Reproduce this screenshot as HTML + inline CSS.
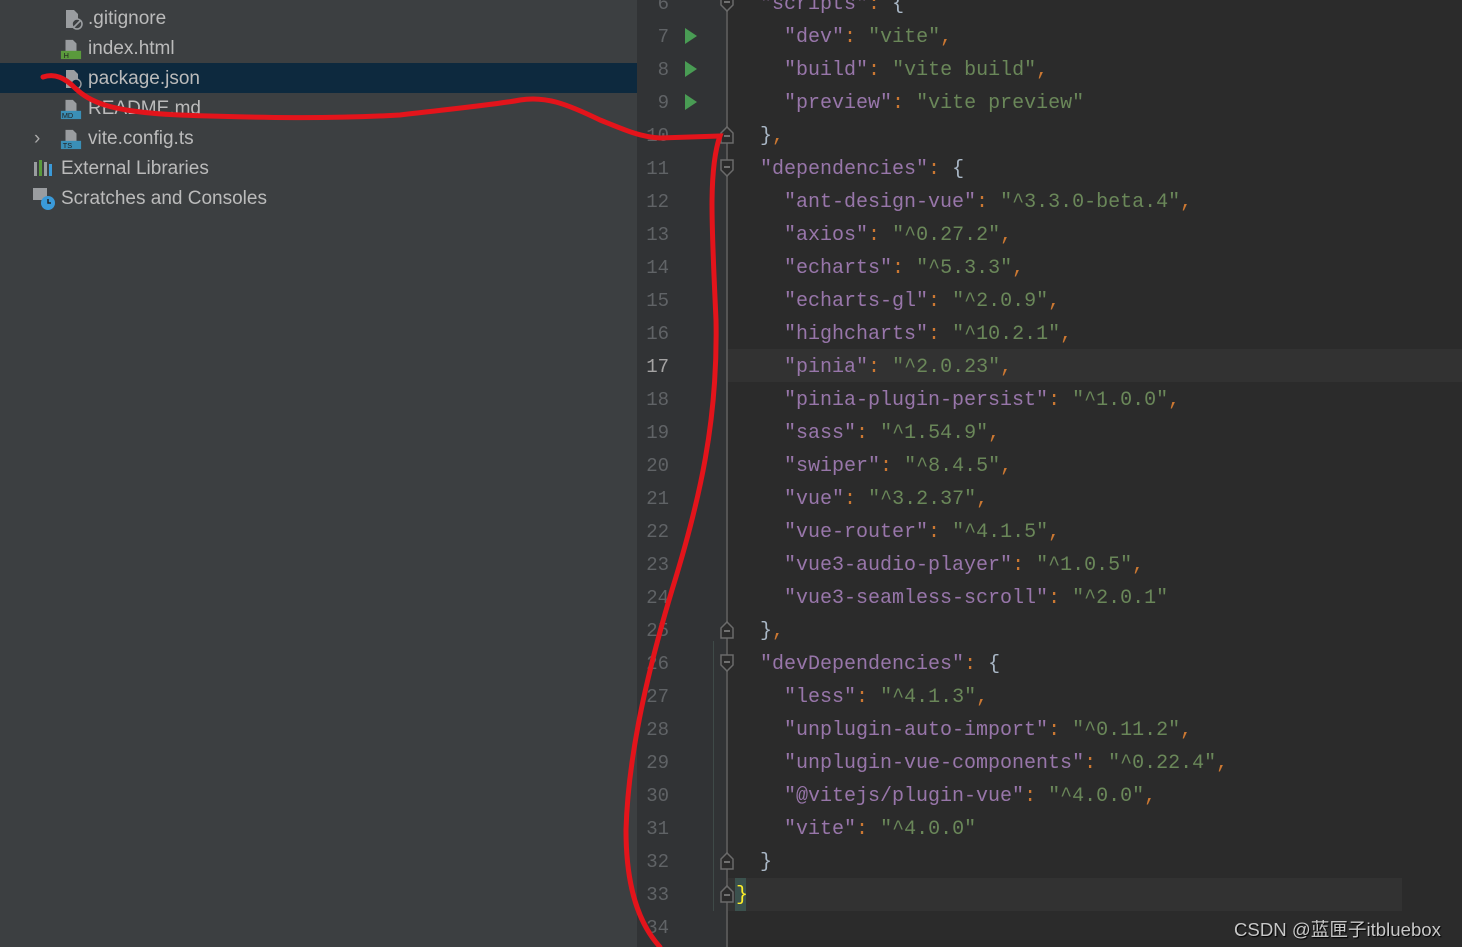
<!DOCTYPE html>
<html><head><meta charset="utf-8"><style>
*{margin:0;padding:0;box-sizing:border-box}
body{width:1462px;height:947px;overflow:hidden;background:#2b2b2b;position:relative;font-family:"Liberation Sans",sans-serif}
#side{position:absolute;left:0;top:0;width:637px;height:947px;background:#3c3f41}
.row{position:absolute;left:0;width:637px;height:30px;line-height:32px;font-size:19px;color:#bbbbbb}
.sel{background:#0d293e}
.fi{position:absolute;top:5px;width:22px;height:22px}
#gut{position:absolute;left:637px;top:0;width:90px;height:947px;background:#313335}
.ln{position:absolute;left:637px;width:32px;text-align:right;font:19px "Liberation Mono",monospace;color:#606366;height:33px;line-height:33px}
.cl{position:absolute;left:736px;font:20px "Liberation Mono",monospace;white-space:pre;height:33px;line-height:33px;color:#a9b7c6}
.k{color:#9876aa}.s{color:#6a8759}.p{color:#cc7832}
.run{position:absolute;left:685px;width:0;height:0;border-top:8px solid transparent;border-bottom:8px solid transparent;border-left:12px solid #499c54}
.fold{position:absolute;left:719px;width:16px;height:18px}
</style></head><body>
<div id="side">
 <div class="row" style="top:3px"><svg class="fi" style="left:62px" viewBox="0 0 22 22"><path d="M4 2h8l4 4v14H4z" fill="#9a9da0"/><circle cx="15" cy="16" r="5" fill="#3c3f41" stroke="#9a9da0" stroke-width="1.6"/><path d="M12 19l6-6" stroke="#9a9da0" stroke-width="1.6"/></svg><span style="position:absolute;left:88px">.gitignore</span></div>
 <div class="row" style="top:33px"><svg class="fi" style="left:60px" viewBox="0 0 24 22"><path d="M6 1h8l4 4v9H6z" fill="#9a9da0"/><rect x="1" y="13" width="22" height="9" fill="#5a9a3c"/><text x="4" y="21" font-size="8" fill="#222" font-family="Liberation Sans">H</text></svg><span style="position:absolute;left:88px">index.html</span></div>
 <div class="row sel" style="top:63px"><svg class="fi" style="left:62px" viewBox="0 0 22 22"><path d="M4 2h8l4 4v14H4z" fill="#9a9da0"/><circle cx="14" cy="16" r="5" fill="#0d293e" stroke="#9a9da0" stroke-width="1.4"/></svg><span style="position:absolute;left:88px">package.json</span></div>
 <div class="row" style="top:93px"><svg class="fi" style="left:60px" viewBox="0 0 24 22"><path d="M6 1h8l4 4v9H6z" fill="#9a9da0"/><rect x="1" y="13" width="22" height="9" fill="#3a8fb7"/><text x="2" y="21" font-size="8" fill="#222" font-family="Liberation Sans">MD</text></svg><span style="position:absolute;left:88px">README.md</span></div>
 <div class="row" style="top:123px"><span style="position:absolute;left:34px;color:#aaa">&#8250;</span><svg class="fi" style="left:60px" viewBox="0 0 24 22"><path d="M6 1h8l4 4v9H6z" fill="#9a9da0"/><rect x="1" y="13" width="22" height="9" fill="#3a8fb7"/><text x="3" y="21" font-size="8" fill="#222" font-family="Liberation Sans">TS</text></svg><span style="position:absolute;left:88px">vite.config.ts</span></div>
 <div class="row" style="top:153px"><svg class="fi" style="left:33px" viewBox="0 0 22 22"><rect x="1" y="4" width="3" height="14" fill="#9a9da0"/><rect x="6" y="2" width="3" height="16" fill="#5a9a3c"/><rect x="11" y="4" width="3" height="14" fill="#9a9da0"/><rect x="16" y="6" width="3" height="12" fill="#3a9ad9"/></svg><span style="position:absolute;left:61px">External Libraries</span></div>
 <div class="row" style="top:183px"><svg class="fi" style="left:33px" viewBox="0 0 22 22"><rect x="0" y="0" width="14" height="12" fill="#9a9da0"/><circle cx="15" cy="15" r="7" fill="#3a9ad9"/><path d="M15 11v4h3" stroke="#222" stroke-width="1.5" fill="none"/></svg><span style="position:absolute;left:61px">Scratches and Consoles</span></div>
</div>
<div id="gut"></div>
<div style="position:absolute;left:727px;top:349px;width:735px;height:33px;background:#323232"></div>
<div style="position:absolute;left:727px;top:878px;width:675px;height:33px;background:#323232"></div>
<div style="position:absolute;left:735px;top:878px;width:11px;height:33px;background:#3b514d"></div>
<div style="position:absolute;left:726px;top:0;width:2px;height:947px;background:#555"></div>
<div style="position:absolute;left:713px;top:641px;width:1px;height:270px;background:#3f4a48"></div>
<div class="run" style="top:28px"></div><div class="run" style="top:61px"></div><div class="run" style="top:94px"></div>
<div id="code"></div>
<script>
var L={6:'  <span class="k">"scripts"</span><span class="p">:</span> {',
7:'    <span class="k">"dev"</span><span class="p">:</span> <span class="s">"vite"</span><span class="p">,</span>',
8:'    <span class="k">"build"</span><span class="p">:</span> <span class="s">"vite build"</span><span class="p">,</span>',
9:'    <span class="k">"preview"</span><span class="p">:</span> <span class="s">"vite preview"</span>',
10:'  }<span class="p">,</span>',
11:'  <span class="k">"dependencies"</span><span class="p">:</span> {',
25:'  }<span class="p">,</span>',
26:'  <span class="k">"devDependencies"</span><span class="p">:</span> {',
32:'  }',33:'<span style="color:#ffef28">}</span>',34:''};
var d=[[12,"ant-design-vue","^3.3.0-beta.4",1],[13,"axios","^0.27.2",1],[14,"echarts","^5.3.3",1],[15,"echarts-gl","^2.0.9",1],[16,"highcharts","^10.2.1",1],[17,"pinia","^2.0.23",1],[18,"pinia-plugin-persist","^1.0.0",1],[19,"sass","^1.54.9",1],[20,"swiper","^8.4.5",1],[21,"vue","^3.2.37",1],[22,"vue-router","^4.1.5",1],[23,"vue3-audio-player","^1.0.5",1],[24,"vue3-seamless-scroll","^2.0.1",0],[27,"less","^4.1.3",1],[28,"unplugin-auto-import","^0.11.2",1],[29,"unplugin-vue-components","^0.22.4",1],[30,"@vitejs/plugin-vue","^4.0.0",1],[31,"vite","^4.0.0",0]];
d.forEach(function(a){L[a[0]]='    <span class="k">"'+a[1]+'"</span><span class="p">:</span> <span class="s">"'+a[2]+'"</span>'+(a[3]?'<span class="p">,</span>':'');});
var h='';for(var n=6;n<=34;n++){var t=20.5+(n-7)*33;h+='<div class="ln" style="top:'+t+'px;'+(n==17?'color:#a4a3a3':'')+'">'+n+'</div><div class="cl" style="top:'+t+'px">'+L[n]+'</div>';}
var open=[6,11,26],close=[10,25,32,33];
open.forEach(function(n){var c=36+(n-7)*33;h+='<svg class="fold" style="top:'+(c-9)+'px" viewBox="0 0 16 18"><path d="M2 1h12v10l-6 6-6-6z" fill="#2b2b2b" stroke="#6b6b6b" stroke-width="1.5"/><path d="M5 8h6" stroke="#888" stroke-width="1.5"/></svg>';});
close.forEach(function(n){var c=36+(n-7)*33;h+='<svg class="fold" style="top:'+(c-9)+'px" viewBox="0 0 16 18"><path d="M2 17h12V7L8 1 2 7z" fill="#2b2b2b" stroke="#6b6b6b" stroke-width="1.5"/><path d="M5 10h6" stroke="#888" stroke-width="1.5"/></svg>';});
document.getElementById('code').innerHTML=h;
</script>
<svg style="position:absolute;left:0;top:0" width="1462" height="947"><path d="M43 77 C55 73 65 78 75 88 C90 102 110 112 180 115 C260 118 330 119 400 115 C460 108 500 104 520 100 C545 96 565 103 600 120 C625 130 640 137 660 138 L720 136 C708 170 712 230 716 320 C718 420 700 500 672 590 C645 680 628 760 626 830 C626 890 640 925 660 947" stroke="#e3141b" stroke-width="5" fill="none" stroke-linecap="round"/></svg>
<div style="position:absolute;left:1234px;top:915px;font:18.6px 'Liberation Sans','Noto Sans CJK SC',sans-serif;color:#c8c8c8;text-shadow:1px 1px 1px #000">CSDN @蓝匣子itbluebox</div>
</body></html>
